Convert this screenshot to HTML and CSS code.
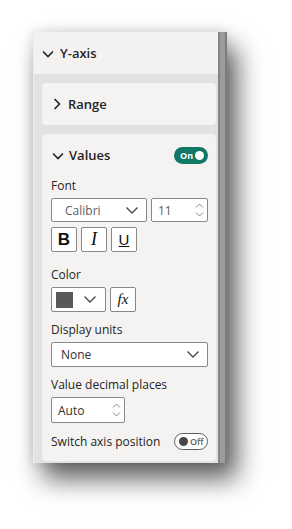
FILE: index.html
```html
<!DOCTYPE html>
<html lang="en">
<head>
  <meta charset="UTF-8" />
  <meta name="viewport" content="width=device-width, initial-scale=1.0" />
  <title>Y-axis format pane</title>
  <link rel="stylesheet" href="styles.css">
</head>
<body>
  <div class="page">
    <div class="frame">
      <div class="pane">
        <div class="section-head">
          <svg class="chev" width="12" height="8" viewBox="0 0 12 8"><path d="M1 1.5 L6 6.5 L11 1.5" /></svg>
          <span>Y-axis</span>
        </div>
        <div class="section-body">
          <div class="card card-closed">
            <svg class="chev" width="8" height="12" viewBox="0 0 8 12"><path d="M1.5 1 L6.5 6 L1.5 11" /></svg>
            <span>Range</span>
          </div>
          <div class="card">
            <div class="card-head">
              <svg class="chev" width="12" height="8" viewBox="0 0 12 8"><path d="M1 1.5 L6 6.5 L11 1.5" /></svg>
              <span class="card-title">Values</span>
              <div class="toggle toggle-on"><span>On</span><i></i></div>
            </div>

            <div class="label">Font</div>
            <div class="row">
              <div class="select select-font">
                <span>Calibri</span>
                <svg class="drop" width="12" height="7" viewBox="0 0 12 7"><path d="M0.5 0.5 L6 6 L11.5 0.5" /></svg>
              </div>
              <div class="spin spin-size">
                <span>11</span>
                <svg class="arrows" width="9" height="14" viewBox="0 0 9 14"><path d="M1 4.5 L4.5 1 L8 4.5 M1 9.5 L4.5 13 L8 9.5" /></svg>
              </div>
            </div>
            <div class="row row-style">
              <button class="btn btn-b">B</button>
              <button class="btn btn-i">I</button>
              <button class="btn btn-u">U</button>
            </div>

            <div class="label label-gap">Color</div>
            <div class="row">
              <div class="color">
                <i class="swatch"></i>
                <svg class="drop" width="12" height="7" viewBox="0 0 12 7"><path d="M0.5 0.5 L6 6 L11.5 0.5" /></svg>
              </div>
              <button class="btn btn-fx">fx</button>
            </div>

            <div class="label">Display units</div>
            <div class="select select-wide">
              <span>None</span>
              <svg class="drop" width="12" height="7" viewBox="0 0 12 7"><path d="M0.5 0.5 L6 6 L11.5 0.5" /></svg>
            </div>

            <div class="label">Value decimal places</div>
            <div class="spin spin-auto">
              <span>Auto</span>
              <svg class="arrows" width="9" height="14" viewBox="0 0 9 14"><path d="M1 4.5 L4.5 1 L8 4.5 M1 9.5 L4.5 13 L8 9.5" /></svg>
            </div>

            <div class="switch-row">
              <span>Switch axis position</span>
              <div class="toggle toggle-off"><i></i><span>Off</span></div>
            </div>
          </div>
        </div>
      </div>
      <div class="scrollbar"></div>
    </div>
  </div>
</body>
</html>
```

FILE: styles.css
```css
* {
  box-sizing: border-box;
  font-family: 'Open Sans', 'Noto Sans', sans-serif;
}
html,
body {
  margin: 0;
  background: #fff;
  color: #252423;
}
.page {
  min-height: 529px;
  padding: 32px 0 0 33px;
}
.frame {
  display: flex;
  width: 194px;
  box-shadow: 10px 16px 24px rgba(0, 0, 0, 0.62), 0 0 12px rgba(0, 0, 0, 0.14);
}
.pane {
  width: 185px;
  background: #e4e2e0;
  border-left: 1px solid #eeedec;
}
.scrollbar {
  width: 9px;
  background: #9c9c9c;
  border-left: 2px solid #858585;
  border-right: 2px solid #7c7c7c;
}
.chev {
  fill: none;
  stroke: #252423;
  stroke-width: 1.6;
}
.section-head {
  height: 42px;
  display: flex;
  align-items: center;
  padding-left: 8px;
  background: #f3f2f1;
  font-size: 13px;
  font-weight: 600;
}
.section-head .chev {
  margin-right: 6px;
  margin-top: 1px;
}
.section-body {
  padding: 9px 2px 2px 8px;
}
.card {
  background: #f4f3f2;
  border-radius: 4px;
  padding: 0 8px 10px 9px;
}
.card-closed {
  height: 42px;
  display: flex;
  align-items: center;
  padding: 0 0 0 11px;
  margin-bottom: 9px;
  font-size: 13px;
  font-weight: 600;
}
.card-closed .chev {
  margin-right: 7px;
}
.card-head {
  height: 42px;
  display: flex;
  align-items: center;
  font-size: 13px;
  font-weight: 600;
}
.card-head .chev {
  margin: 1px 5px 0 1px;
}
.card-title {
  flex: 1;
}
.toggle {
  width: 34px;
  height: 17px;
  border-radius: 9px;
  display: flex;
  align-items: center;
  font-size: 9px;
  font-weight: 700;
  margin-top: 1px;
}
.toggle i {
  width: 9px;
  height: 9px;
  border-radius: 50%;
}
.toggle-on {
  background: #117865;
  color: #fff;
  padding: 0 4px 0 6px;
  justify-content: space-between;
}
.toggle-on i {
  background: #fff;
}
.toggle-off {
  background: #fff;
  border: 1px solid #605e5c;
  color: #605e5c;
  padding: 0 3px 0 4px;
  gap: 2px;
  font-weight: 600;
}
.toggle-off i {
  background: #484644;
}
.label {
  font-size: 12px;
  line-height: 20px;
  margin-top: 8px;
}
.card-head + .label {
  margin-top: 0;
}
.label-gap {
  margin-top: 13px;
}
.label + .row,
.label + .select,
.label + .spin {
  margin-top: 2px;
}
.row {
  display: flex;
  gap: 4px;
}
.row-style {
  margin-top: 5px;
}
.select,
.spin,
.color {
  display: flex;
  align-items: center;
  justify-content: space-between;
  background: #fff;
  border: 1px solid #8a8886;
  border-radius: 2px;
  font-size: 12px;
  color: #605e5c;
}
.select {
  height: 24px;
  padding: 0 8px 0 13px;
}
.select-font {
  width: 96px;
}
.select-wide {
  width: 157px;
  height: 25px;
  padding: 0 8px 0 9px;
  color: #323130;
}
.drop {
  fill: none;
  stroke: #484644;
  stroke-width: 1.3;
}
.spin {
  height: 24px;
  padding: 0 3px 0 6px;
}
.spin-size {
  width: 57px;
}
.spin-auto {
  width: 74px;
  height: 26px;
  color: #323130;
}
.arrows {
  fill: none;
  stroke: #8a8886;
  stroke-width: 1;
}
.btn {
  width: 26px;
  height: 25px;
  padding: 0;
  background: #fff;
  border: 1px solid #8a8886;
  border-radius: 2px;
  color: #111;
}
.btn-b {
  font-family: 'Liberation Sans', sans-serif;
  font-weight: 700;
  font-size: 17px;
}
.btn-i {
  font-family: 'Liberation Serif', serif;
  font-style: italic;
  font-size: 18px;
}
.btn-u {
  font-family: 'Liberation Sans', sans-serif;
  font-size: 15px;
  text-decoration: underline;
}
.btn-fx {
  font-family: 'Liberation Serif', serif;
  font-style: italic;
  font-size: 15px;
}
.color {
  width: 55px;
  height: 25px;
  padding: 0 9px 0 4px;
}
.swatch {
  width: 17px;
  height: 16px;
  background: #595959;
}
.switch-row {
  display: flex;
  align-items: center;
  justify-content: space-between;
  height: 20px;
  margin-top: 8px;
  font-size: 12px;
}
```
